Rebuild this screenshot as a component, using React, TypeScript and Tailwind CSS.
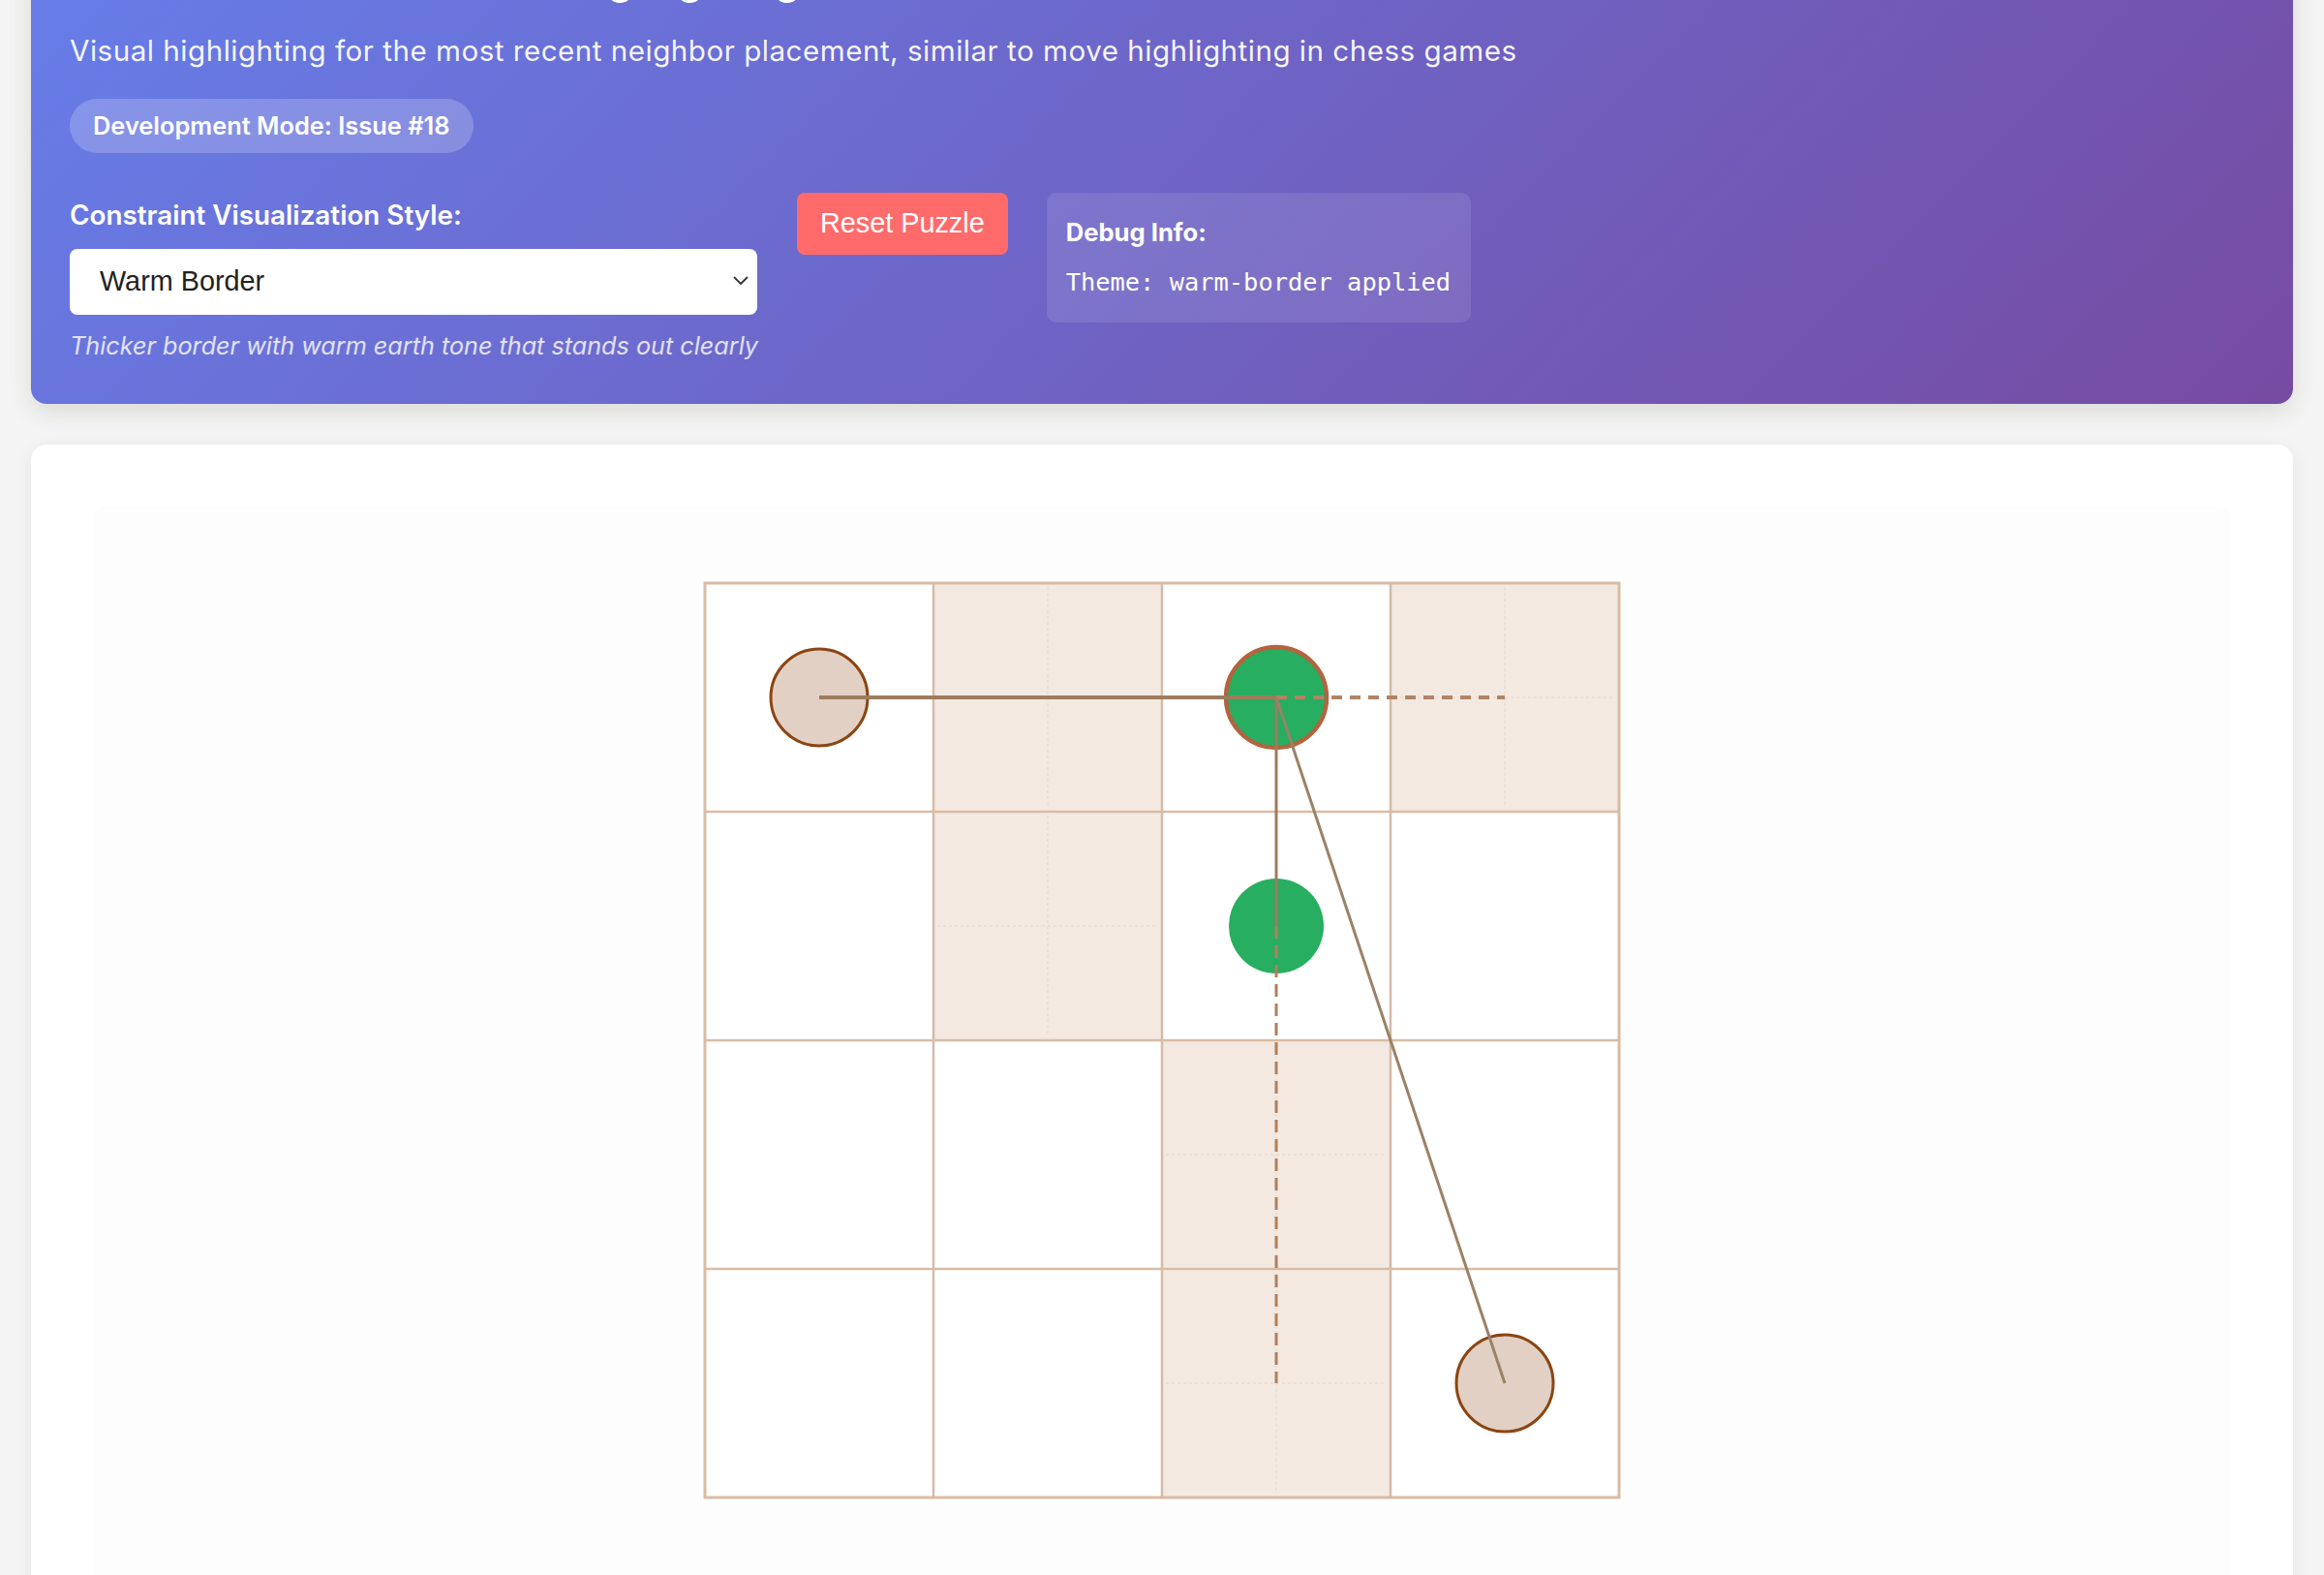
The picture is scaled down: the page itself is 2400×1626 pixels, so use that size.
import React from "react";

const CELL = 236;
const N = 4;
const shaded: [number, number][] = [
  [0, 1],
  [1, 1],
  [0, 3],
  [2, 2],
  [3, 2],
];
const c = (i: number) => i * CELL + CELL / 2;

function Board() {
  const size = CELL * N;
  return (
    <svg width={size} height={size} viewBox={`0 0 ${size} ${size}`} overflow="visible" className="block">
      <rect x={0} y={0} width={size} height={size} fill="#ffffff" />
      {shaded.map(([r, col]) => (
        <rect key={`s${r}${col}`} x={col * CELL} y={r * CELL} width={CELL} height={CELL} fill="#f3e9e1" />
      ))}
      {shaded.map(([r, col]) => (
        <g key={`d${r}${col}`} stroke="#eadccf" strokeWidth={1.5} strokeDasharray="3 3">
          <line x1={col * CELL + 4} y1={c(r)} x2={col * CELL + CELL - 4} y2={c(r)} />
          <line x1={c(col)} y1={r * CELL + 4} x2={c(col)} y2={r * CELL + CELL - 4} />
        </g>
      ))}
      {[1, 2, 3].map((i) => (
        <g key={`g${i}`}>
          <line x1={i * CELL} y1={0} x2={i * CELL} y2={size} stroke="#d2bba9" strokeWidth={2.5} />
          <line x1={0} y1={i * CELL} x2={size} y2={i * CELL} stroke="#dabca4" strokeWidth={2.5} />
        </g>
      ))}
      <rect x={0} y={0} width={size} height={size} fill="none" stroke="#d9bba3" strokeWidth={3} />

      <circle cx={c(0)} cy={c(0)} r={50} fill="#e2d0c4" stroke="#8b4513" strokeWidth={3} />
      <circle cx={c(3)} cy={c(3)} r={50} fill="#e2d0c4" stroke="#8b4513" strokeWidth={3} />
      <circle cx={c(2)} cy={c(0)} r={52} fill="#27ae60" stroke="#b3643f" strokeWidth={4.5} />
      <circle cx={c(2)} cy={c(1)} r={49} fill="#27ae60" />

      <line x1={c(0)} y1={c(0)} x2={c(2)} y2={c(0)} stroke="#9c7c5e" strokeWidth={4} />
      <line x1={c(2)} y1={c(0)} x2={c(3)} y2={c(0)} stroke="#b08466" strokeWidth={4} strokeDasharray="11 8" />
      <line x1={c(2)} y1={c(0)} x2={c(2)} y2={c(1)} stroke="#9c7c5e" strokeWidth={3} />
      <line x1={c(2)} y1={c(1)} x2={c(2)} y2={c(3)} stroke="#b0805c" strokeWidth={3} strokeDasharray="13 7" />
      <line x1={c(2)} y1={c(0)} x2={c(3)} y2={c(3)} stroke="#9a8266" strokeWidth={3} />
    </svg>
  );
}

export default function App() {
  return (
    <div className="w-full h-[1626px] overflow-hidden bg-[#f4f4f4] font-['Inter','Noto_Sans',sans-serif]">
      <div className="px-[32px] -mt-[84px]">
        <header className="rounded-[16px] bg-[linear-gradient(135deg,#667eea_0%,#764ba2_100%)] px-[40px] pt-[40px] pb-[41px] text-white shadow-[0_8px_24px_rgba(40,40,0,0.12)]">
          <h1 className="text-[40px] leading-[48px] font-bold">Issue #18: Last Placement Highlighting</h1>
          <p className="mt-[27px] whitespace-nowrap text-[29.6px] leading-[42px] tracking-[0.5px] text-white/95">
            Visual highlighting for the most recent neighbor placement, similar to move highlighting in chess games
          </p>
          <div className="mt-[29px] inline-flex h-[56px] items-center whitespace-nowrap rounded-full bg-white/20 px-[24px] text-[25.4px] font-semibold">
            Development Mode: Issue #18
          </div>
          <div className="mt-[41px] flex items-start">
            <div className="flex w-[710px] shrink-0 flex-col">
              <label className="mt-[6px] whitespace-nowrap text-[27.8px] leading-[34px] font-semibold">
                Constraint Visualization Style:
              </label>
              <div className="relative mt-[18px] h-[68px]">
                <select
                  defaultValue="warm"
                  className="h-[68px] w-full appearance-none rounded-[8px] bg-white pl-[31px] pr-[40px] font-['Liberation_Sans',Arial,sans-serif] text-[28.8px] text-[#222] outline-none"
                >
                  <option value="warm">Warm Border</option>
                  <option value="cool">Cool Border</option>
                </select>
                <svg
                  className="pointer-events-none absolute right-[9px] top-[28px]"
                  width="16"
                  height="10"
                  viewBox="0 0 16 10"
                >
                  <path
                    d="M1.5 1.5 L8 8 L14.5 1.5"
                    fill="none"
                    stroke="#333"
                    strokeWidth="1.8"
                    strokeLinecap="round"
                    strokeLinejoin="round"
                  />
                </svg>
              </div>
              <p className="mt-[13px] whitespace-nowrap text-[25.2px] leading-[38px] italic text-white/80">
                Thicker border with warm earth tone that stands out clearly
              </p>
            </div>
            <button className="ml-[41px] h-[64px] shrink-0 whitespace-nowrap rounded-[8px] bg-[#ff6b6b] px-[24px] font-['Liberation_Sans',Arial,sans-serif] text-[28.8px] text-white">
              Reset Puzzle
            </button>
            <div className="ml-[40px] flex w-[438px] shrink-0 flex-col gap-[13px] rounded-[10px] bg-white/10 pl-[20px] pr-[10px] pt-[22px] pb-[23px]">
              <div className="text-[25.6px] leading-[38px] font-bold">Debug Info:</div>
              <div className="whitespace-nowrap font-['DejaVu_Sans_Mono','Liberation_Mono',monospace] text-[25.4px] leading-[38px]">
                Theme: warm-border applied
              </div>
            </div>
          </div>
        </header>

        <main className="mt-[42px] min-h-[1400px] rounded-[16px] bg-white px-[64px] pt-[64px] shadow-[0_4px_20px_rgba(0,0,0,0.06)]">
          <div className="flex min-h-[1300px] justify-center rounded-[12px] bg-[#fdfdfd] pt-[79px]">
            <Board />
          </div>
        </main>
      </div>
    </div>
  );
}
